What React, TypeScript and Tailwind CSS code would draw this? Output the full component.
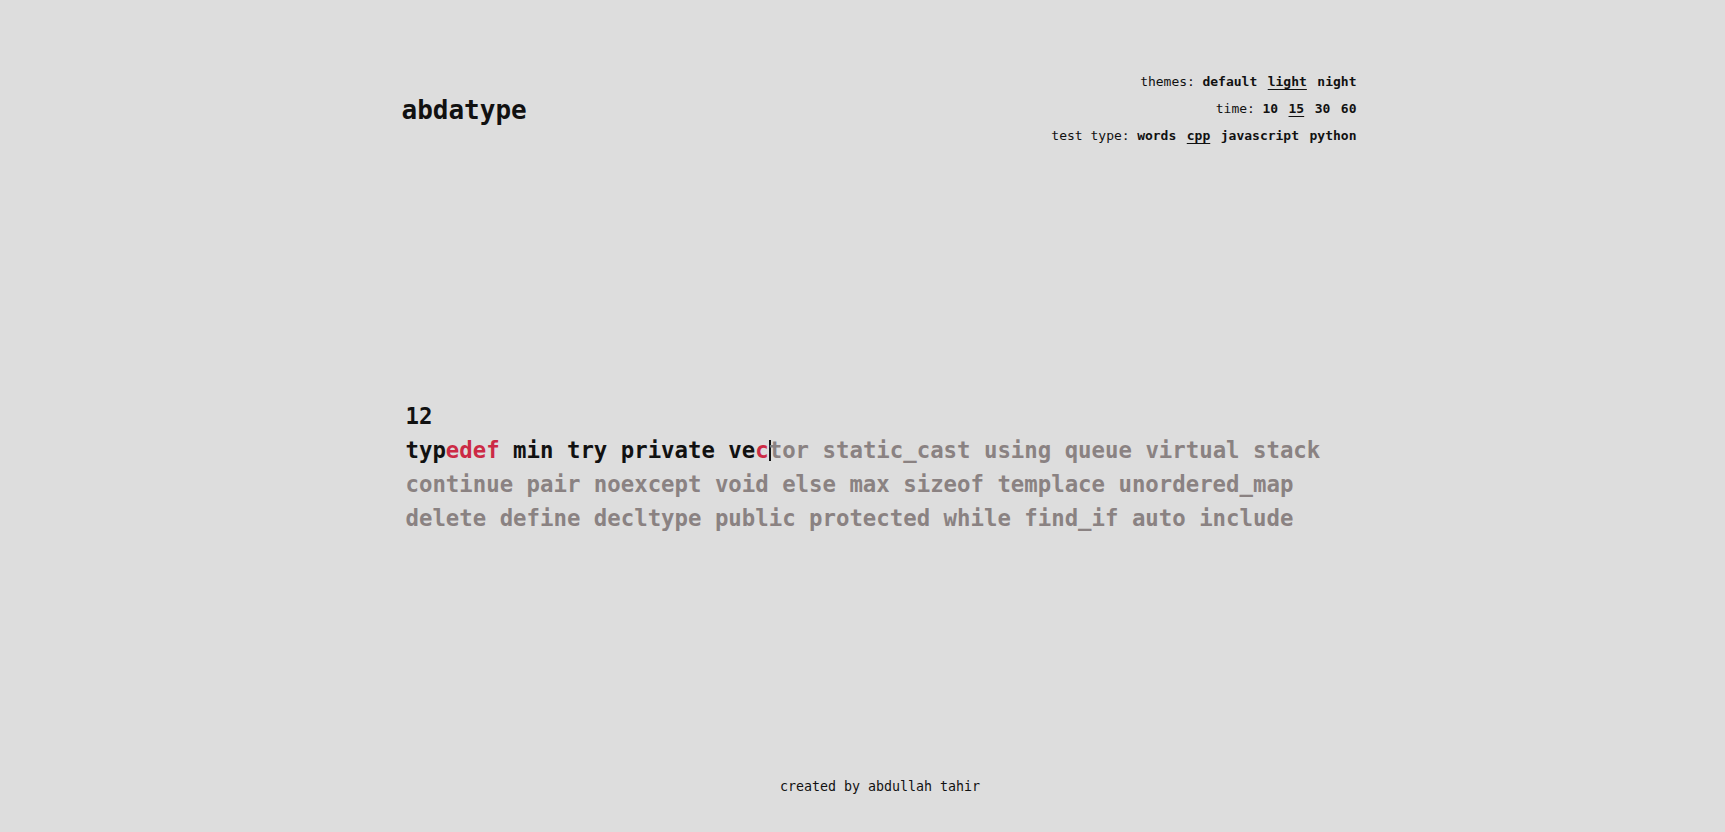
import React from "react";

const mono = { fontFamily: '"DejaVu Sans Mono", "Liberation Mono", monospace' };

function Option({ label, active }: { label: string; active?: boolean }) {
  return (
    <span className={"ml-[10.5px] font-bold cursor-pointer " + (active ? "underline underline-offset-[3px]" : "")}>
      {label}
    </span>
  );
}

function Row({ title, items, active }: { title: string; items: string[]; active: string }) {
  return (
    <div className="flex justify-end items-center h-[27px]">
      <span className="mr-[-3px]">{title}</span>
      {items.map((it) => (
        <Option key={it} label={it} active={it === active} />
      ))}
    </div>
  );
}

const rest1 = "tor static_cast using queue virtual stack";
const line2 = "continue pair noexcept void else max sizeof templace unordered_map";
const line3 = "delete define decltype public protected while find_if auto include";

export default function App() {
  return (
    <div className="min-h-[832px] w-full bg-[#dddddd] text-[#111111] flex flex-col" style={mono}>
      <div className="flex justify-center pl-[34px]">
        <div className="w-[954px] flex flex-col">
          <header className="flex justify-between items-center pt-[68px]">
            <h1 className="text-[26px] font-bold ml-[-1px] mt-[3px]">abdatype</h1>
            <div className="text-[13px] flex flex-col">
              <Row title="themes:" items={["default", "light", "night"]} active="light" />
              <Row title="time:" items={["10", "15", "30", "60"]} active="15" />
              <Row title="test type:" items={["words", "cpp", "javascript", "python"]} active="cpp" />
            </div>
          </header>

          <main className="mt-[250px] pl-[3px] text-[22.35px] font-bold leading-[34px]">
            <div>12</div>
            <div className="whitespace-pre">
              <span>typ</span>
              <span className="text-[#cc2a45]">edef</span>
              <span> min try private ve</span>
              <span className="text-[#cc2a45]">c</span>
              <span className="inline-block w-[2px] h-[21px] bg-[#111111] align-[-3px] mr-[-2px]"></span>
              <span className="text-[#8a8282]">{rest1}</span>
            </div>
            <div className="text-[#8a8282]">{line2}</div>
            <div className="text-[#8a8282]">{line3}</div>
          </main>
        </div>
      </div>
      <footer className="mt-auto pb-[35px] pl-[35px] text-center text-[13.3px]">created by abdullah tahir</footer>
    </div>
  );
}
